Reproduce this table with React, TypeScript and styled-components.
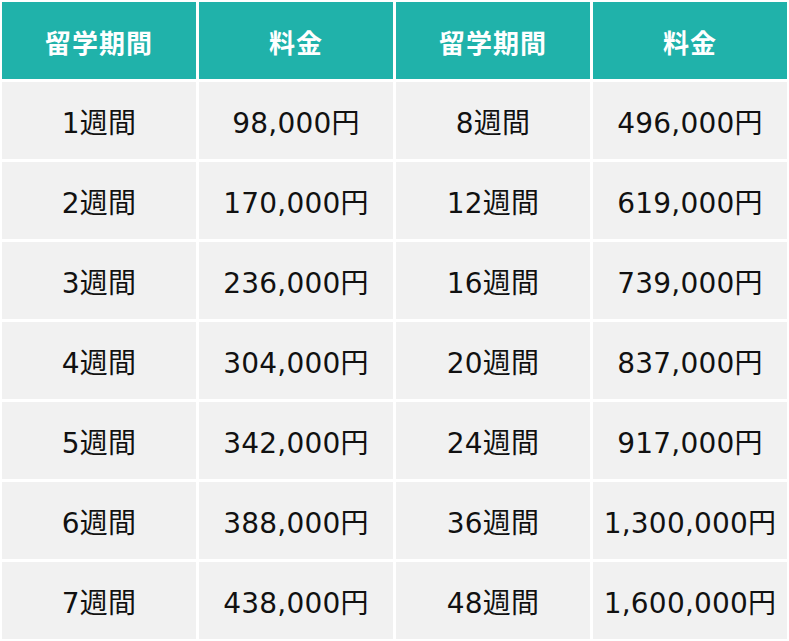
import styled, { createGlobalStyle } from "styled-components";

const GlobalStyle = createGlobalStyle`
  html, body {
    margin: 0;
    padding: 0;
    background: #ffffff;
  }
`;

const rows: [string, string, string, string][] = [
  ["1週間", "98,000円", "8週間", "496,000円"],
  ["2週間", "170,000円", "12週間", "619,000円"],
  ["3週間", "236,000円", "16週間", "739,000円"],
  ["4週間", "304,000円", "20週間", "837,000円"],
  ["5週間", "342,000円", "24週間", "917,000円"],
  ["6週間", "388,000円", "36週間", "1,300,000円"],
  ["7週間", "438,000円", "48週間", "1,600,000円"],
];

const headers = ["留学期間", "料金", "留学期間", "料金"];

const App = () => {
  return (
    <>
      <GlobalStyle />
      <PriceTable>
        {headers.map((h, i) => (
          <HeaderCell key={`h-${i}`}>{h}</HeaderCell>
        ))}
        {rows.map((row, r) =>
          row.map((value, c) => <Cell key={`${r}-${c}`}>{value}</Cell>)
        )}
      </PriceTable>
    </>
  );
};

export default App;

const PriceTable = styled.div`
  display: grid;
  grid-template-columns: repeat(4, 194px);
  grid-auto-rows: 77px;
  gap: 3px;
  padding: 2px;
  width: max-content;
`;

const BaseCell = styled.div`
  display: flex;
  align-items: center;
  justify-content: center;
  white-space: nowrap;
  font-family: "DejaVu Sans", "Noto Sans CJK JP", sans-serif;
`;

const HeaderCell = styled(BaseCell)`
  background: #20b2aa;
  color: #ffffff;
  font-family: "Noto Sans CJK JP", sans-serif;
  font-size: 26px;
  font-weight: 700;
  letter-spacing: 1px;
  padding-top: 1px;
`;

const Cell = styled(BaseCell)`
  background: #f1f1f1;
  color: #111111;
  font-size: 28px;
  letter-spacing: 0.2px;
`;
